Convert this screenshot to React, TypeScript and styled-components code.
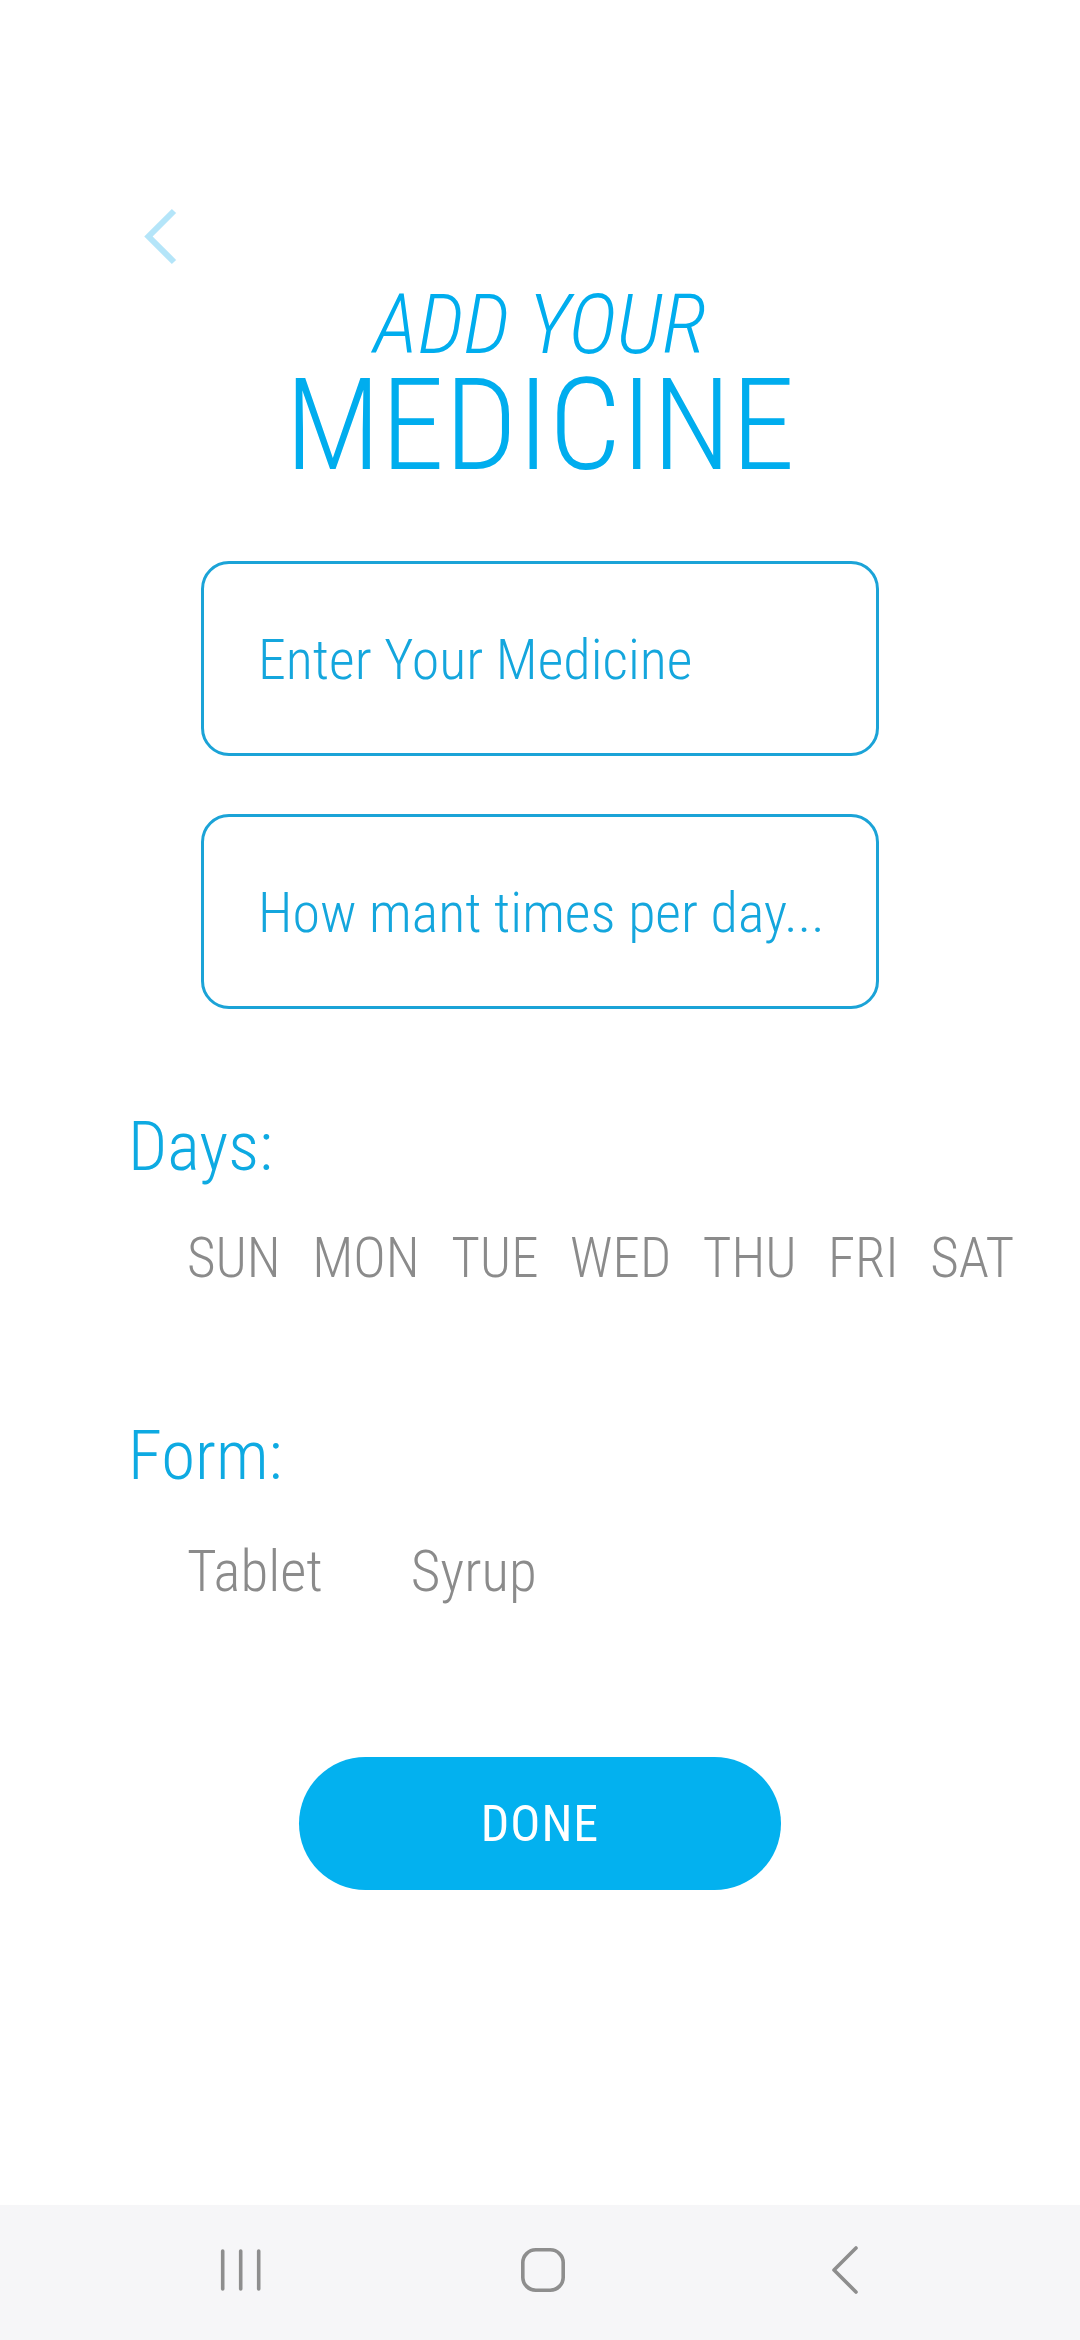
import React from "react";
import styled, { createGlobalStyle } from "styled-components";

const GlobalStyle = createGlobalStyle`
  html, body {
    margin: 0;
    padding: 0;
    background: #ffffff;
  }
  body {
    font-family: "Roboto Condensed", "Roboto", "Liberation Sans", sans-serif;
    font-stretch: condensed;
  }
  * { box-sizing: border-box; }
`;

const Screen = styled.div`
  width: 1080px;
  height: 2340px;
  display: flex;
  flex-direction: column;
  background: #ffffff;
  overflow: hidden;
`;

const Content = styled.main`
  flex: 1;
  display: flex;
  flex-direction: column;
  padding-top: 205px;
`;

const BackButton = styled.button`
  align-self: flex-start;
  margin-left: 140px;
  padding: 0;
  border: none;
  background: transparent;
  width: 40px;
  height: 62px;
  display: flex;
`;

const TitleBlock = styled.h1`
  margin: 16px 0 0;
  display: flex;
  flex-direction: column;
  align-items: center;
  font-weight: 300;
  color: #00adee;
`;

const TitleSmall = styled.span`
  font-size: 83px;
  line-height: 83px;
  font-style: italic;
  font-weight: 300;
`;

const TitleLarge = styled.span`
  font-size: 128px;
  line-height: 118px;
  font-weight: 300;
`;

const Fields = styled.div`
  margin-top: 77px;
  display: flex;
  flex-direction: column;
  align-items: center;
  gap: 58px;
`;

const Field = styled.div`
  width: 678px;
  height: 195px;
  border: 3px solid #1ba3d7;
  border-radius: 28px;
  display: flex;
  align-items: center;
  padding-left: 54px;
  padding-top: 2px;
  font-size: 56px;
  font-weight: 300;
  color: #14a6dd;
`;

const Section = styled.section<{ $top: number; $gap: number }>`
  margin-top: ${(p) => p.$top}px;
  display: flex;
  flex-direction: column;
  gap: ${(p) => p.$gap}px;
`;

const Label = styled.div`
  padding-left: 128px;
  font-size: 69px;
  line-height: 69px;
  font-weight: 300;
  color: #0eaae2;
`;

const OptionRow = styled.div<{ $gap: number; $size: number }>`
  padding-left: 187px;
  display: flex;
  gap: ${(p) => p.$gap}px;
  font-size: ${(p) => p.$size}px;
  line-height: ${(p) => p.$size}px;
`;

const Option = styled.span`
  font-weight: 300;
  color: #8b8b8b;
`;

const DoneButton = styled.button`
  align-self: center;
  margin-top: 157px;
  width: 482px;
  height: 133px;
  border: none;
  border-radius: 67px;
  background: #03b1ef;
  color: #ffffff;
  font-family: inherit;
  font-stretch: condensed;
  font-size: 50px;
  font-weight: 400;
  letter-spacing: 1px;
  display: flex;
  align-items: center;
  justify-content: center;
  padding: 0;
`;

const NavBar = styled.nav`
  height: 135px;
  flex-shrink: 0;
  background: #f6f6f8;
  display: flex;
  align-items: center;
  justify-content: center;
  gap: 242px;
  padding-bottom: 5px;
  padding-left: 5px;
`;

const NavIcon = styled.svg`
  width: 60px;
  height: 60px;
  display: block;
`;

const days = ["SUN", "MON", "TUE", "WED", "THU", "FRI", "SAT"];
const forms = ["Tablet", "Syrup"];

export default function App() {
  return (
    <>
      <GlobalStyle />
      <Screen>
        <Content>
          <BackButton aria-label="Back">
            <svg width="40" height="62" viewBox="0 0 40 62">
              <path
                d="M34 6 L8.5 31.5 L34 57"
                fill="none"
                stroke="#b4e5f9"
                strokeWidth="6"
                strokeLinecap="butt"
                strokeLinejoin="miter"
              />
            </svg>
          </BackButton>
          <TitleBlock>
            <TitleSmall>ADD YOUR</TitleSmall>
            <TitleLarge>MEDICINE</TitleLarge>
          </TitleBlock>
          <Fields>
            <Field>Enter Your Medicine</Field>
            <Field>How mant times per day...</Field>
          </Fields>
          <Section $top={103} $gap={50}>
            <Label>Days:</Label>
            <OptionRow $gap={31.5} $size={55}>
              {days.map((d) => (
                <Option key={d}>{d}</Option>
              ))}
            </OptionRow>
          </Section>
          <Section $top={135} $gap={53}>
            <Label>Form:</Label>
            <OptionRow $gap={88} $size={57}>
              {forms.map((f) => (
                <Option key={f}>{f}</Option>
              ))}
            </OptionRow>
          </Section>
          <DoneButton>DONE</DoneButton>
        </Content>
        <NavBar>
          <NavIcon viewBox="0 0 60 60">
            <g stroke="#8e8e8e" strokeWidth="3.6" strokeLinecap="round">
              <line x1="11.7" y1="11" x2="11.7" y2="49" />
              <line x1="29.7" y1="11" x2="29.7" y2="49" />
              <line x1="47.7" y1="11" x2="47.7" y2="49" />
            </g>
          </NavIcon>
          <NavIcon viewBox="0 0 60 60">
            <rect
              x="9.8"
              y="9.8"
              width="40.4"
              height="40.4"
              rx="13"
              fill="none"
              stroke="#8e8e8e"
              strokeWidth="3.6"
            />
          </NavIcon>
          <NavIcon viewBox="0 0 60 60">
            <path
              d="M41 8 L19 30 L41 52"
              fill="none"
              stroke="#8e8e8e"
              strokeWidth="3.6"
              strokeLinecap="round"
              strokeLinejoin="round"
            />
          </NavIcon>
        </NavBar>
      </Screen>
    </>
  );
}
